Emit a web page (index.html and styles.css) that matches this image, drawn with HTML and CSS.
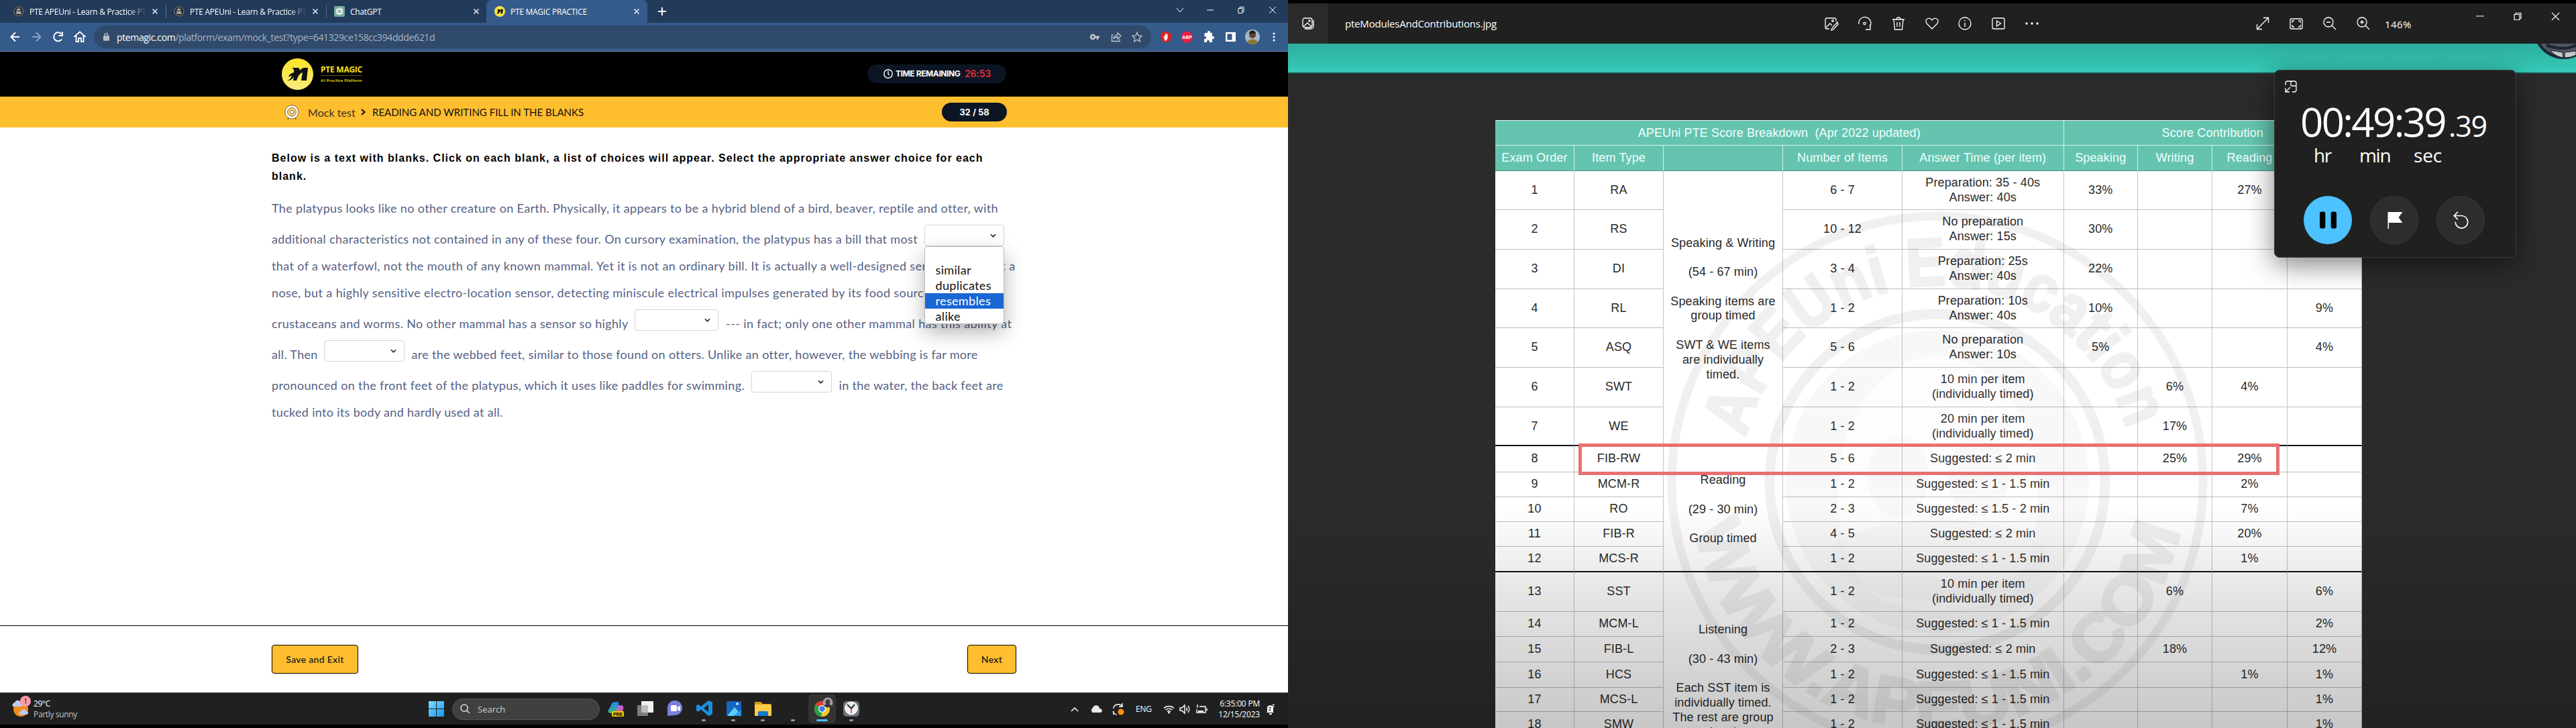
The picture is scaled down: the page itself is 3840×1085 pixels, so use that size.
FILE: index.html
```html
<!DOCTYPE html>
<html lang="en">
<head>
<meta charset="utf-8">
<title>PTE MAGIC PRACTICE</title>
<link rel="stylesheet" href="styles.css">
</head>
<body>
<div class="desktop">
<section class="screen-left">
  <div class="tabs">
    <div class="tab t1"><svg class="fav" viewBox="0 0 16 16"><circle cx="8" cy="8" r="8" fill="#23282e"/><circle cx="8" cy="8" r="7" fill="none" stroke="#8d9297"/><path d="M5 5c2-3 5-2 6 1l1 6H4z" fill="#9ea2a6"/><circle cx="7" cy="7" r="1" fill="#222"/><circle cx="10" cy="7" r="1" fill="#222"/></svg><span class="tt fade">PTE APEUni - Learn &amp; Practice PT</span><svg class="x" viewBox="0 0 8 8"><path d="M.5.5l7 7M7.500.5l-7 7"/></svg></div>
    <div class="tab t2"><svg class="fav" viewBox="0 0 16 16"><circle cx="8" cy="8" r="8" fill="#23282e"/><circle cx="8" cy="8" r="7" fill="none" stroke="#8d9297"/><path d="M5 5c2-3 5-2 6 1l1 6H4z" fill="#9ea2a6"/><circle cx="7" cy="7" r="1" fill="#222"/><circle cx="10" cy="7" r="1" fill="#222"/></svg><span class="tt fade">PTE APEUni - Learn &amp; Practice PT</span><svg class="x" viewBox="0 0 8 8"><path d="M.5.5l7 7M7.500.5l-7 7"/></svg></div>
    <div class="tab t3"><svg class="fav" viewBox="0 0 16 16"><rect width="16" height="16" rx="2" fill="#74aa9c"/><g fill="none" stroke="#fff" stroke-width=".9"><ellipse cx="8" cy="8" rx="2.600" ry="5.500"/><ellipse cx="8" cy="8" rx="2.600" ry="5.500" transform="rotate(60 8 8)"/><ellipse cx="8" cy="8" rx="2.600" ry="5.500" transform="rotate(120 8 8)"/></g></svg><span class="tt">ChatGPT</span><svg class="x" viewBox="0 0 8 8"><path d="M.5.5l7 7M7.500.5l-7 7"/></svg></div>
    <div class="tab t4"><svg class="fav" viewBox="0 0 47 47"><circle cx="23.500" cy="23.500" r="23.500" fill="#fde047"/><path d="M8 33c5-2 7-5 9-8-3 0-5 1-6 2 1-3 3-5 5-6l-3-7h9l2 5 5-5h9l-3 19h-8l2-12c-3 2-6 5-8 8l-2 4z" fill="#111"/></svg><span class="tt">PTE MAGIC PRACTICE</span><svg class="x" viewBox="0 0 8 8"><path d="M.5.5l7 7M7.500.5l-7 7"/></svg></div>
    <svg class="plus" viewBox="0 0 12 12"><path d="M6 0v12M0 6h12"/></svg>
    <svg class="winctl" viewBox="0 0 150 12"><path d="M1 3l5 6 5-6M46 6h10M93 3.500h6v7h-6zM95 3.500v-2h6v7h-2M139 1l10 10M149 1l-10 10"/></svg>
  </div>
  <div class="toolbar">
    <svg class="nav" viewBox="0 0 112 18"><g fill="none" stroke="#fff" stroke-width="2"><path d="M14 9H2M8 2.500 1.500 9 8 15.500"/><path d="M33 9h12M39 2.500 45.500 9 39 15.500" stroke="#8ba2bd"/><path d="M77 12.500a6.500 6.500 0 1 1-.5-8M78 1.500v5.500h-5.500"/><path d="M98.500 16v-8h-2l7.500-6.500L111.500 8h-2v8h-3.500v-5h-4v5z" stroke-width="1.800"/></g></svg>
    <div class="omnibox">
      <svg class="lock" viewBox="0 0 10 13"><rect y="4.500" width="10" height="8.500" rx="1" fill="#b9bfc8"/><path d="M2.500 5V3a2.500 2.500 0 0 1 5 0v2" fill="none" stroke="#b9bfc8" stroke-width="1.500"/></svg>
      <span class="url"><b>ptemagic.com</b>/platform/exam/mock_test?type=641329ce158cc394ddde621d</span>
      <svg class="omni-ic" viewBox="0 0 80 16"><g fill="none" stroke="#c3c7cd" stroke-width="1.300"><circle cx="5" cy="8" r="3" stroke-width="2.500"/><path d="M8 8h7M12 8v4" stroke-width="2.600"/><path d="M35 5h-1.500v9.500H45V11M36 11c0-4 3-6 6-6V2l5 4.500L42 11V8c-3 0-5 1-6 3z"/><path d="M71 1.500l2 4.700 5 .4-3.800 3.300 1.200 5L71 12.200 66.600 15l1.200-5L64 6.600l5-.4z"/></g></svg>
    </div>
    <svg class="ext" viewBox="0 0 172 24"><circle cx="8" cy="12" r="8" fill="#e0201c"/><path d="M4 11l2 1V7l1 4V5.500l1 5V6l1 4.500V7l1.500 1v6l-2 3.500H6.500z" fill="#fff"/><path d="M35.500 4h7l5 5v7l-5 4.500h-7L31 16V9z" fill="#ed1e45"/><text x="39.500" y="15" text-anchor="middle" class="abp">ABP</text><path d="M66 6h4c-1-4 5-4 4 0h3v5c4-1 4 5 0 4v5h-4c1-4-5-4-4 0h-4v-5c4 1 4-5 0-4z" fill="#fff"/><path d="M97 5h15v14H97zM99.500 7.500v9h7v-9z" fill="#fff" fill-rule="evenodd"/><circle cx="137" cy="12" r="11" fill="#a9b7c6"/><circle cx="137" cy="9" r="5" fill="#5b4332"/><path d="M132 7c0-6 10-6 10 0z" fill="#20201f"/><path d="M129 20c2-6 14-6 16 0-4 4-12 4-16 0z" fill="#8b7733"/><g fill="#fff"><circle cx="169" cy="7" r="1.500"/><circle cx="169" cy="12" r="1.500"/><circle cx="169" cy="17" r="1.500"/></g></svg>
  </div>
  <header class="brandbar">
    <svg class="logo" viewBox="0 0 47 47"><defs><linearGradient id="lg" x2="0" y2="1"><stop stop-color="#fde425"/><stop offset="1" stop-color="#f9ec7e"/></linearGradient></defs><circle cx="23.500" cy="23.500" r="23.500" fill="url(#lg)"/><path d="M8 33c4-1 6-4 7-7-2 0-4 1-5 2 1-4 4-6 8-7 1-4-1-6-3-7h9c2 0 3 2 3 4 2-2 4-4 7-4h5l-2 19h-8l2-12c-3 1-6 4-7 7l-2 5h-5l1-6c-2 4-5 6-10 6z" fill="#111"/></svg>
    <div class="brand"><span class="bn">PTE MAGIC</span><span class="bs">AI Practice Platform</span></div>
    <div class="pill time"><svg viewBox="0 0 14 14"><circle cx="7" cy="7" r="6.200"/><path d="M7 3v4.500l2 1.500"/></svg><span class="tr">TIME REMAINING</span><span class="red">26:53</span></div>
  </header>
  <div class="crumbs">
    <svg class="target" viewBox="0 0 24 24"><path d="M5 24l3-4M19 24l-3-4" stroke="#6b5a3a" stroke-width="1.500"/><circle cx="12" cy="12" r="11" fill="#fff" stroke="#6b5a3a"/><circle cx="12" cy="12" r="7" fill="#ffd36a" stroke="#6b5a3a"/><circle cx="12" cy="12" r="3" fill="#fff" stroke="#6b5a3a"/></svg>
    <span class="mock">Mock test</span>
    <svg class="chev" viewBox="0 0 7 10"><path d="M1 1l4.500 4L1 9"/></svg>
    <span class="sect">READING AND WRITING FILL IN THE BLANKS</span>
    <div class="pill count"><span>32 / 58</span></div>
  </div>
  <main class="exam">
    <h1><span>Below is a text with blanks. Click on each blank, a list of choices will appear. Select the appropriate answer choice for each</span><br>blank.</h1>
    <div class="passage">
      <div class="line"><span>The platypus looks like no other creature on Earth. Physically, it appears to be a hybrid blend of a bird, beaver, reptile and otter, with</span></div>
      <div class="line tall"><span class="g1">additional characteristics not contained in any of these four. On cursory examination, the platypus has a bill that most</span>
        <div class="select open"><svg viewBox="0 0 10 6"><path d="M1 1l4 4 4-4"/></svg>
          <ul class="menu"><li>&nbsp;</li><li>similar</li><li>duplicates</li><li class="on">resembles</li><li>alike</li></ul></div></div>
      <div class="line loose"><span>that of a waterfowl, not the mouth of any known mammal. Yet it is not an ordinary bill. It is actually a well-designed sensor that is not a</span></div>
      <div class="line loose"><span>nose, but a highly sensitive electro-location sensor, detecting miniscule electrical impulses generated by its food sources:</span></div>
      <div class="line tall"><span class="g2">crustaceans and worms. No other mammal has a sensor so highly</span><div class="select sw125"><svg viewBox="0 0 10 6"><path d="M1 1l4 4 4-4"/></svg></div><span class="g3 loose">--- in fact; only one other mammal has this ability at</span></div>
      <div class="line tall tight"><span class="g4">all. Then</span><div class="select"><svg viewBox="0 0 10 6"><path d="M1 1l4 4 4-4"/></svg></div><span class="g3">are the webbed feet, similar to those found on otters. Unlike an otter, however, the webbing is far more</span></div>
      <div class="line tall"><span class="g5">pronounced on the front feet of the platypus, which it uses like paddles for swimming.</span><div class="select"><svg viewBox="0 0 10 6"><path d="M1 1l4 4 4-4"/></svg></div><span class="g3 tight">in the water, the back feet are</span></div>
      <div class="line tight"><span>tucked into its body and hardly used at all.</span></div>
    </div>
  </main>
  <footer class="actions"><button class="btn save">Save and Exit</button><button class="btn next">Next</button></footer>
  <div class="taskbar">
    <svg class="wx" viewBox="0 0 28 34"><circle cx="13" cy="20" r="11" fill="#f28c1c"/><path d="M1 16a4 4 0 0 1 3-6c2-5 8-4 9 1 3 0 3 5 0 5zM11 28a3 3 0 0 1 2-5c2-4 7-3 8 0 4 0 4 5 0 5z" fill="#b9cdf6"/><circle cx="20" cy="8" r="8" fill="#ff99a4"/><text x="20" y="12" text-anchor="middle" class="badge">1</text></svg>
    <div class="weather"><span>29°C</span><span class="dim">Partly sunny</span></div>
    <svg class="start" viewBox="0 0 23 23"><defs><linearGradient id="w" x2="1" y2="1"><stop stop-color="#7fdcfb"/><stop offset="1" stop-color="#1797f2"/></linearGradient></defs><path d="M0 0h11v11H0zM12 0h11v11H12zM0 12h11v11H0zM12 12h11v11H12z" fill="url(#w)"/></svg>
    <div class="search"><svg viewBox="0 0 16 16"><circle cx="6.500" cy="6.500" r="5.500"/><path d="M10.500 10.500l4.500 4.500"/></svg><span>Search</span></div>
    <svg class="apps" viewBox="0 0 380 40"><defs><linearGradient id="c1" x2="0" y2="1"><stop stop-color="#2a7ff0"/><stop offset="1" stop-color="#2cc07a"/></linearGradient><linearGradient id="c2" x2="0" y2="1"><stop stop-color="#b25ff2"/><stop offset="1" stop-color="#f2705a"/></linearGradient></defs>
      <path d="M5 14c1-4 3-5 8-5 3 0 4 1 3 4l-3 9c-1 4-3 4-7 4-5 0-6-2-5-5z" fill="url(#c1)"/><path d="M15 14h4c4 0 5 3 4 6l-2 5c-1 3-3 4-8 4-2 0-3-1-2-3z" fill="url(#c2)"/><rect x="6" y="23" width="18" height="8" rx="1" fill="#f9c800"/><text x="15" y="29.500" text-anchor="middle" class="pre">PRE</text>
      <rect x="44" y="14" width="16" height="16" fill="#7d7d7d"/><rect x="50" y="8" width="18" height="17" fill="#efefef"/><rect x="50" y="14" width="10" height="11" fill="#bdbdbd"/>
      <path d="M89 30V18a11 11 0 1 1 11 11z" fill="#7b7fe0"/><rect x="94" y="14" width="9" height="9" rx="1.500" fill="#fff"/><path d="M104 17l4-2v8l-4-2z" fill="#fff"/>
      <path d="M150 7l6 2.500v18l-6 2.500-11-9.500-4 3-3-1.500v-7.500l3-1.500 4 3zM150 13l-7 5.500 7 5.500z" fill="#1e8fdd" fill-rule="evenodd"/>
      <rect x="177" y="8" width="22" height="22" rx="2" fill="#1266c4"/><path d="M178 30l11-13 10 12v1z" fill="#5ad0f5"/><path d="M187 30l12-9v9z" fill="#2b96ea"/><circle cx="193" cy="12" r="1.800" fill="#fff"/>
      <path d="M219 9h9l3 3h12v18h-24z" fill="#d99b12"/><rect x="219" y="13" width="25" height="17" rx="1" fill="#fccb4a"/><path d="M224 30v-5q0-2 2-2h11q2 0 2 2v5z" fill="#1179c8"/>
      <rect x="300" y="-1" width="39" height="41" rx="4" fill="#333" stroke="#404040"/><circle cx="319.500" cy="19.500" r="11.500" fill="#f7c927"/><path d="M319.500 19.500L309.500 13.500a11.500 11.500 0 0 1 20 0z" fill="#e33b2e"/><path d="M319.500 19.500l-10-6a11.500 11.500 0 0 0 9 17.500z" fill="#28a04b"/><circle cx="319.500" cy="19.500" r="5.500" fill="#fff"/><circle cx="319.500" cy="19.500" r="4.300" fill="#3b7ded"/><circle cx="328" cy="10" r="7.500" fill="#9aa2ad"/><circle cx="328" cy="9" r="3.500" fill="#4a3a30"/><path d="M322.500 15c2-4 9-4 11 0-3 3-8 3-11 0z" fill="#343434"/>
      <rect x="351" y="8" width="24" height="23" rx="5" fill="#69737c"/><circle cx="363" cy="18.500" r="10" fill="#f1f1f1"/><path d="M357 13l6 6 5-6" fill="none" stroke="#222" stroke-width="2"/><path d="M363 19v7" stroke="#d33" stroke-width="1.500"/>
      <g fill="#9a9a9a"><rect x="140" y="35" width="6" height="3" rx="1.500"/><rect x="184" y="35" width="6" height="3" rx="1.500"/><rect x="228" y="35" width="6" height="3" rx="1.500"/><rect x="273" y="35" width="6" height="3" rx="1.500"/><rect x="360" y="35" width="6" height="3" rx="1.500"/></g><rect x="311" y="35" width="17" height="3" rx="1.500" fill="#4cc2ff"/></svg>
    <svg class="tray" viewBox="0 0 82 18"><path d="M1 12l5-5 5 5" fill="none" stroke="#fff" stroke-width="1.500"/><path d="M33 14a4 4 0 0 1 0-7c2-6 10-4 10 1 5 0 5 6 1 6z" fill="#e8e8e8"/><path d="M64 8c0-7 10-8 13-3M77 0v5h-5M64 17v-5M63 12c2 5 4 5 6 5" fill="none" stroke="#fff" stroke-width="1.400"/><circle cx="75" cy="13" r="4.500" fill="#f7930f"/></svg>
    <span class="eng">ENG</span>
    <svg class="tray2" viewBox="0 0 66 16"><g fill="none" stroke="#fff" stroke-width="1.400"><path d="M1 6.500a11 11 0 0 1 15 0M3.500 9a7.500 7.500 0 0 1 10 0M6 11.500a4 4 0 0 1 5 0"/><path d="M25 6h3l4-4v12l-4-4h-3zM34.500 5.500a4 4 0 0 1 0 5M37 3a8 8 0 0 1 0 10"/><path d="M54 4h9v9H50V8M65 6.500v4M51 1v5"/></g><circle cx="8.500" cy="13" r="1.500" fill="#fff"/><path d="M52 10h8v2h-8z" fill="#fff"/></svg>
    <div class="clock"><span>6:35:00 PM</span><span>12/15/2023</span></div>
    <svg class="bell" viewBox="0 0 14 16"><path d="M2 12V6c0-5 9-5 9 0v6l1 1H1zM5 14h4v2H5z" fill="#fff"/><path d="M4.500 5.500h3l-3 4h3" fill="none" stroke="#222"/><path d="M9.500 1h3l-3 3.500h3" fill="none" stroke="#fff"/></svg>
  </div>
</section>

<section class="screen-right">
  <div class="viewer-bar">
    <div class="vicon"><svg viewBox="0 0 18 18"><rect x="1" y="1" width="14" height="14" rx="3"/><path d="M4 17h9a4 4 0 0 0 4-4V4M2 14l6-6 6 6"/><circle cx="11" cy="5" r="1"/></svg></div>
    <span class="fname">pteModulesAndContributions.jpg</span>
    <svg class="vtools" viewBox="0 0 320 20"><g fill="none" stroke="#fff" stroke-width="1.300"><path d="M18 7V4a2 2 0 0 0-2-2H4a2 2 0 0 0-2 2v12a2 2 0 0 0 2 2h4M3 16l6-6 3 3M20 8l-8 9-1 3 3-1 7-8z"/><circle cx="13" cy="6" r="1.300"/><path d="M52 11a9 9 0 1 1 16 4M69 11v8h-7"/><circle cx="60.500" cy="10" r="1.700"/><path d="M102 4h18M104 4l1.500 15h11L118 4M108 4c0-4 6-4 6 0M109 8v7M113 8v7"/><path d="M161 18l-8-8c-4-6 4-11 8-5 4-6 12-1 8 5z"/><circle cx="210" cy="10" r="9"/><path d="M210 9v6M210 5v1.500"/><rect x="251" y="2" width="18" height="16" rx="2"/><path d="M257.500 6l6 4-6 4z"/></g><g fill="#fff"><circle cx="302" cy="10" r="1.700"/><circle cx="310" cy="10" r="1.700"/><circle cx="318" cy="10" r="1.700"/></g></svg>
    <svg class="vzoom" viewBox="0 0 170 20"><g fill="none" stroke="#fff" stroke-width="1.300"><path d="M2 18L18 2M11 1.500h7.500V9M1.500 11v7.500H9"/><rect x="51" y="3" width="18" height="15" rx="2"/><path d="M54 9V6h3M63 6h3v3M66 12v3h-3M57 15h-3v-3"/><circle cx="108" cy="8" r="7"/><path d="M113 13l6 6M105 8h6"/><circle cx="158" cy="8" r="7"/><path d="M163 13l6 6M155 8h6M158 5v6"/></g></svg>
    <span class="pct">146%</span>
    <svg class="vwin" viewBox="0 0 126 12"><path d="M0 6h12M57 3.500h8v8h-8zM59 3.500v-2h8v8h-2M113 1l11 11M124 1l-11 11"/></svg>
  </div>
  <div class="photo">
    <div class="teal"><svg viewBox="0 0 58 24"><circle cx="40" cy="-23" r="46" fill="#1c2533"/><circle cx="40" cy="-23" r="42" fill="#50555e"/><path d="M14 0q26 10 44 0v5q-20 8-44 0z" fill="#1c2533"/><path d="M20 10l18 3 1 8Q26 19 20 10zM58 11l-17 2 0 8q10 0 17-4z" fill="#c4c8cc" stroke="#1c2533"/></svg></div>
    <div class="sheet">
      <div class="h wide">APEUni PTE Score Breakdown&nbsp; (Apr 2022 updated)</div><div class="h score">Score Contribution</div>
      <div class="h b">Exam Order</div><div class="h b">Item Type</div><div class="h b"></div><div class="h b">Number of Items</div><div class="h b">Answer Time (per item)</div><div class="h b">Speaking</div><div class="h b">Writing</div><div class="h b">Reading</div><div class="h b"></div>
      <div class="grp ga">Speaking &amp; Writing<br><br>(54 - 67 min)<br><br>Speaking items are<br>group timed<br><br>SWT &amp; WE items<br>are individually<br>timed.</div>
      <div class="grp gb">Reading<br><br>(29 - 30 min)<br><br>Group timed</div>
      <div class="grp gc">Listening<br><br>(30 - 43 min)<br><br>Each SST item is<br>individually timed.<br>The rest are group<br>timed.</div>
      <div>1</div><div>RA</div><div>6 - 7</div><div>Preparation: 35 - 40s<br>Answer: 40s</div><div>33%</div><div></div><div>27%</div><div></div>
      <div>2</div><div>RS</div><div>10 - 12</div><div>No preparation<br>Answer: 15s</div><div>30%</div><div></div><div></div><div></div>
      <div>3</div><div>DI</div><div>3 - 4</div><div>Preparation: 25s<br>Answer: 40s</div><div>22%</div><div></div><div></div><div></div>
      <div>4</div><div>RL</div><div>1 - 2</div><div>Preparation: 10s<br>Answer: 40s</div><div>10%</div><div></div><div></div><div>9%</div>
      <div>5</div><div>ASQ</div><div>5 - 6</div><div>No preparation<br>Answer: 10s</div><div>5%</div><div></div><div></div><div>4%</div>
      <div>6</div><div>SWT</div><div>1 - 2</div><div>10 min per item<br>(individually timed)</div><div></div><div>6%</div><div>4%</div><div></div>
      <div class="k">7</div><div class="k">WE</div><div class="k">1 - 2</div><div class="k">20 min per item<br>(individually timed)</div><div class="k"></div><div class="k">17%</div><div class="k"></div><div class="k"></div>
      <div>8</div><div>FIB-RW</div><div>5 - 6</div><div>Suggested: ≤ 2 min</div><div></div><div>25%</div><div>29%</div><div></div>
      <div>9</div><div>MCM-R</div><div>1 - 2</div><div>Suggested: ≤ 1 - 1.5 min</div><div></div><div></div><div>2%</div><div></div>
      <div>10</div><div>RO</div><div>2 - 3</div><div>Suggested: ≤ 1.5 - 2 min</div><div></div><div></div><div>7%</div><div></div>
      <div>11</div><div>FIB-R</div><div>4 - 5</div><div>Suggested: ≤ 2 min</div><div></div><div></div><div>20%</div><div></div>
      <div class="k">12</div><div class="k">MCS-R</div><div class="k">1 - 2</div><div class="k">Suggested: ≤ 1 - 1.5 min</div><div class="k"></div><div class="k"></div><div class="k">1%</div><div class="k"></div>
      <div>13</div><div>SST</div><div>1 - 2</div><div>10 min per item<br>(individually timed)</div><div></div><div>6%</div><div></div><div>6%</div>
      <div>14</div><div>MCM-L</div><div>1 - 2</div><div>Suggested: ≤ 1 - 1.5 min</div><div></div><div></div><div></div><div>2%</div>
      <div>15</div><div>FIB-L</div><div>2 - 3</div><div>Suggested: ≤ 2 min</div><div></div><div>18%</div><div></div><div>12%</div>
      <div>16</div><div>HCS</div><div>1 - 2</div><div>Suggested: ≤ 1 - 1.5 min</div><div></div><div></div><div>1%</div><div>1%</div>
      <div>17</div><div>MCS-L</div><div>1 - 2</div><div>Suggested: ≤ 1 - 1.5 min</div><div></div><div></div><div></div><div>1%</div>
      <div>18</div><div>SMW</div><div>1 - 2</div><div>Suggested: ≤ 1 - 1.5 min</div><div></div><div></div><div></div><div>1%</div>
      <svg class="mark" viewBox="0 0 1292 906"><g fill="none" stroke="#000"><circle cx="659" cy="538" r="396" stroke-width="13"/><circle cx="659" cy="538" r="250" stroke-width="15"/></g><circle cx="659" cy="538" r="226" opacity=".5"/><path d="M520 640c-40-190 60-290 140-290s180 100 140 290c-30 70-60 90-140 90s-110-20-140-90z" fill="#fff" opacity=".7"/><ellipse cx="600" cy="530" rx="45" ry="60" opacity=".4"/><ellipse cx="720" cy="530" rx="45" ry="60" opacity=".4"/><path d="M500 640c30-60 290-60 320 0 20 100-340 100-320 0z" opacity=".4"/>
        <path id="up" d="M366 538a293 293 0 0 1 586 0" fill="none" transform="rotate(13 659 538)"/><text class="ring"><textPath href="#up" textLength="775" lengthAdjust="spacingAndGlyphs">APEUni Education</textPath></text>
        <path id="dn" d="M291 538a368 368 0 0 0 736 0" fill="none"/><text class="ring"><textPath href="#dn" startOffset="68" textLength="1015" lengthAdjust="spacingAndGlyphs">WWW.APEUNI.COM</textPath></text></svg>
      <div class="redbox"></div>
    </div>
    <div class="shade"></div>
  </div>
  <aside class="stopwatch">
    <svg class="pop" viewBox="0 0 18 18"><path d="M1 7V4a3 3 0 0 1 3-3h10a3 3 0 0 1 3 3v10a3 3 0 0 1-3 3h-3M9 1v5a2 2 0 0 0 2 2h6M1 17l7-7M1 11v6h6"/></svg>
    <div class="digits"><span>00:49:39</span><small>.39</small></div>
    <div class="units"><span class="u1">hr</span><span class="u2">min</span><span class="u3">sec</span></div>
    <div class="ctl"><i class="blue"><svg viewBox="0 0 24 24"><rect width="8" height="24" rx="3" fill="#000"/><rect x="16" width="8" height="24" rx="3" fill="#000"/></svg></i><i><svg viewBox="0 0 24 26"><path d="M2 26V1h22l-6 8 6 8H3.500v9z" fill="#fff"/></svg></i><i><svg viewBox="0 0 26 28"><path d="M8 1L2 7l6 6M2 7h12a10 10 0 1 1-10 10" fill="none" stroke="#fff" stroke-width="1.800"/></svg></i></div>
  </aside>
</section>
</div>
</body>
</html>
```
FILE: styles.css
```css
*{box-sizing:border-box}
body{margin:0;background:#000;font-family:"Open Sans","Noto Sans",sans-serif}
svg{display:block;flex:none;overflow:visible}
span{white-space:nowrap}
.desktop{display:flex;width:3840px;height:1085px;overflow:hidden}
.screen-left,.screen-right{width:1920px;height:1085px;display:flex;flex-direction:column;flex:none}

/* browser window */
.tabs{height:34px;background:#233b5b;display:flex;align-items:center;color:#fff;font-size:12px;letter-spacing:-.27px;flex:none}
.tab{display:flex;align-items:center;height:20px;flex:none}
.fav{width:16px;height:16px;margin-right:8px}
.tt{flex:1;overflow:hidden}
.fade{max-width:174px;-webkit-mask:linear-gradient(90deg,#000 85%,transparent);mask:linear-gradient(90deg,#000 85%,transparent)}
.x{width:8px;height:8px;stroke:#e8edf3;stroke-width:1.500;fill:none;margin-left:auto}
.t1{padding-left:20px;width:248px;padding-right:12px;border-right:1px solid #5c6f89}
.t2{padding-left:11px;width:239px;padding-right:12px;border-right:1px solid #5c6f89}
.t3{padding-left:11px;width:238px;padding-right:11px}
.t4{padding-left:12px;width:240px;padding-right:12px;background:#355b8a;height:34px;border-radius:8px 8px 0 0}
.plus{width:12px;height:12px;margin-left:16px;stroke:#fff;stroke-width:2}
.winctl{width:150px;height:12px;margin-left:auto;margin-right:17px;margin-top:-5px;fill:none;stroke:#fff;stroke-width:1}
.toolbar{height:43px;background:#355b8a;border-bottom:1px solid #6d8ab0;display:flex;align-items:center;flex:none}
.nav{width:112px;height:18px;margin-left:15px}
.omnibox{width:1576px;height:34px;border-radius:17px;background:#304a6b;margin-left:13px;display:flex;align-items:center;padding:0 12px 0 14px;color:#aab4c2;font-size:14px}
.lock{width:9px;height:12px;margin-right:11px}
.url{letter-spacing:-.37px}
.url b{font-weight:400;color:#fff}
.omni-ic{width:80px;height:16px;margin-left:auto}
.ext{width:172px;height:24px;margin-left:14px}
.abp{font:700 7px "Liberation Sans",sans-serif;fill:#fff}

/* exam header */
.brandbar{height:67px;background:#000;display:flex;align-items:center;padding-left:420px;flex:none}
.logo{width:47px;height:47px}
.brand{margin-left:11px;display:flex;flex-direction:column;color:#f9e21b;width:62px}
.bn{font:700 12px/17px "Open Sans",sans-serif;letter-spacing:-.25px;border-bottom:1px solid #5c5310}
.bs{font:600 6.500px/13px Lato,sans-serif;letter-spacing:.22px}
.pill{background:#0c1524;color:#fff;height:28px;border-radius:14px;display:flex;align-items:center;font:700 13px Inter,sans-serif}
.time{width:207px;margin-left:753px;margin-top:-2px;padding-left:24px}
.time svg{width:14px;height:14px;fill:none;stroke:#fff;stroke-width:1.400;margin-right:4px}
.tr{width:97px;font-size:12px;letter-spacing:-.4px}
.red{color:#e42c36;font-weight:600;margin-left:6px;font-size:14px;letter-spacing:-.17px}
.crumbs{height:46px;background:#ffbe2e;display:flex;align-items:center;padding-left:424px;font:15px Lato,sans-serif;color:#111;flex:none}
.target{width:22px;height:24px}
.mock{margin-left:13px;width:71px;color:#3b3320;font-size:16px;letter-spacing:.05px}
.chev{width:7px;height:10px;fill:none;stroke:#111;stroke-width:2;margin:0 10px 0 8px}
.sect{width:314px}
.count{width:97px;margin-left:535px;justify-content:center}

/* question */
.exam{background:#fff;padding:32px 0 0 405px;flex:1;min-height:0}
h1{font:700 16px/27px "Liberation Sans",Arial,sans-serif;margin:0;letter-spacing:1px;color:#000}
.passage{margin-top:14px;color:#566285;font:18px/40px Lato,sans-serif;letter-spacing:.345px}
.line{height:40px;display:flex;align-items:flex-end}
.tall{height:46px}
.loose{letter-spacing:.39px}
.tight{letter-spacing:.32px}
.line span{flex:none}
.g1{width:972.500px}.g2{width:541px}.g3{margin-left:11px}.g4{width:78px}.g5{width:715px}
.select{width:119.500px;height:32px;border:1px solid #d4d4d4;border-radius:4px;background:#fff;margin-bottom:9px;position:relative;display:flex;align-items:center;justify-content:flex-end;padding-right:11px;flex:none}
.sw125{width:125px}
.select svg{width:9px;height:6px;fill:none;stroke:#222;stroke-width:1.800}
.menu{position:absolute;z-index:2;left:-1px;top:31px;width:119px;height:116px;margin:0;padding:0;list-style:none;background:#fff;border:1px solid #bbb;border-radius:5px;box-shadow:0 12px 30px rgba(0,0,0,.3);color:#111;line-height:23px;font-size:18px;overflow:hidden}
.menu li{height:23px;padding-left:16px}
.menu .on{background:#1967d2;color:#fff}
.actions{height:100px;background:#fff;border-top:1px solid #000;display:flex;padding:28px 405px 0;justify-content:space-between;flex:none}
.btn{height:43px;background:#ffbe2e;border:1px solid #000;border-radius:4px;font:600 14px Lato,sans-serif;letter-spacing:.3px;color:#222;padding:0}
.save{width:129px}.next{width:73px}

/* taskbar */
.taskbar{height:48px;background:#202020;border-top:1px solid #464646;display:flex;align-items:center;color:#fff;font-size:12px;letter-spacing:-.2px;flex:none}
.screen-left::after{content:"";height:5px;background:#000;flex:none}
.wx{width:28px;height:34px;margin-left:18px;margin-top:-6px}
.badge{font:10px "Open Sans",sans-serif;fill:#111}
.weather{margin-left:4px;width:70px;display:flex;flex-direction:column;line-height:16px;letter-spacing:-.34px}
.dim{color:#c4c4c4}
.start{width:23px;height:23px;margin-left:519px}
.search{width:220px;height:32px;border-radius:16px;background:#404040;border:1px solid #555;margin-left:12px;padding-left:11px;display:flex;align-items:center;font-size:13px;letter-spacing:0;color:#ccc}
.search svg{width:15px;height:15px;fill:none;stroke:#ddd;stroke-width:1.600;margin-right:11px}
.apps{width:380px;height:40px;margin-left:12px}
.pre{font:700 7px "Liberation Sans",sans-serif}
.tray{width:82px;height:18px;margin-left:310px}
.eng{margin-left:15px;width:24px}
.tray2{width:66px;height:16px;margin-left:17px}
.clock{margin-left:15px;width:63px;display:flex;flex-direction:column;align-items:flex-end;line-height:16px}
.bell{width:14px;height:16px;margin-left:9px}

/* photo viewer */
.screen-right{border-top:5px solid #000;background:#2b2b2b;position:relative}
.viewer-bar{height:60px;background:#202020;display:flex;align-items:center;color:#fff;font-size:15px;flex:none}
.vicon{width:60px;height:60px;background:#2b2b2b;display:flex;align-items:center;justify-content:center}
.vicon svg{width:18px;height:18px}
.vicon svg,.pop{fill:none;stroke:#fff;stroke-width:1.300}
.fname{margin-left:25px;width:226px;letter-spacing:-.2px}
.vtools{width:320px;height:20px;margin-left:488px}
.vzoom{width:170px;height:20px;margin-left:324px}
.pct{margin-left:22px;width:40px;margin-top:2px;letter-spacing:.46px}
.vwin{width:126px;height:12px;margin-left:96px;margin-top:-22px;fill:none;stroke:#fff;stroke-width:1.200}
.photo{height:1020px;position:relative;overflow:hidden;flex:none;background:#2b2b2b}
.teal{height:45px;background:linear-gradient(#2eae9f,#36cbb9);border-bottom:2px solid #1b4f4c;display:flex;justify-content:flex-end;overflow:hidden}
.teal svg{width:58px;height:24px}
.sheet{position:relative;margin:69px 0 0 309px;width:1292px;display:grid;grid-template-columns:118px 133px 178px 178px 240.500px 110.500px 111px 112px 111px;grid-template-rows:37px 37.500px 58px 59px 59px 58px 59px 59.500px 58px 38.500px 37px 37px 37px 38.500px 58.500px 37px 38px 38px 36.500px 37px;background:#fff;border-top:1px solid #eee;font:18px/21.800px "Liberation Sans",Arial,sans-serif;letter-spacing:.13px;color:#2a2a2a;text-align:center}
.sheet>div{border-right:1px solid #c4c4c4;border-bottom:1px solid #bdbdbd;display:flex;align-items:center;justify-content:center;padding-top:1px}
.sheet>.h{background:#65c4b0;color:#f2fffc;border-color:#d5f3ec}
.sheet>.b{border-bottom-color:#4a8f80}
.wide{grid-column:1/6}.score{grid-column:6/10}
.sheet>.k,.sheet>.ga,.sheet>.gb{border-bottom:2px solid #111}
.sheet>.grp{grid-column:3;display:block}
.sheet>.ga{grid-row:3/10;padding-top:97px}
.sheet>.gb{grid-row:10/15;padding-top:40px}
.sheet>.gc{grid-row:15/21;padding-top:75px;height:266px;overflow:hidden}
.mark{position:absolute;left:0;top:0;width:1292px;height:906px;opacity:.055;pointer-events:none}
.ring{font:700 100px "Liberation Sans Narrow","Liberation Sans",sans-serif;stroke:#000;stroke-width:4px}
.sheet>.redbox{position:absolute;left:124px;top:481px;width:1045px;height:47px;border:5px solid #e8706f}
.shade{position:absolute;left:0;bottom:0;width:100%;height:330px;background:linear-gradient(rgba(0,0,0,0),rgba(0,0,0,.1) 40%,rgba(0,0,0,.22))}

/* stopwatch window */
.stopwatch{position:absolute;left:1470px;top:99px;width:361px;height:280px;background:#202020;border:1px solid #3c3c3c;border-radius:8px;box-shadow:0 10px 40px rgba(0,0,0,.5);color:#fff;padding:15px 0 0 15px}
.pop{width:18px;height:18px}
.digits{margin:6px 0 0 23px;height:74px;display:flex;align-items:baseline;font:60px/74px "Open Sans",sans-serif;letter-spacing:-2.670px}
.digits span{width:221px}
.digits small{font-size:43px;letter-spacing:-1.160px}
.units{display:flex;font-size:28px;line-height:34px;margin:-4px 0 0 43px;letter-spacing:-1.300px}
.u1{width:68px}.u2{width:81px}.u3{letter-spacing:-.16px}
.ctl{display:flex;gap:27px;margin:44px 0 0 28px}
.ctl i{width:72px;height:72px;border-radius:50%;background:#2d2d2d;border:1px solid #393939;display:flex;align-items:center;justify-content:center}
.ctl .blue{background:#4cc2ff;border:0}
.ctl svg{width:25px;height:26px}
```
